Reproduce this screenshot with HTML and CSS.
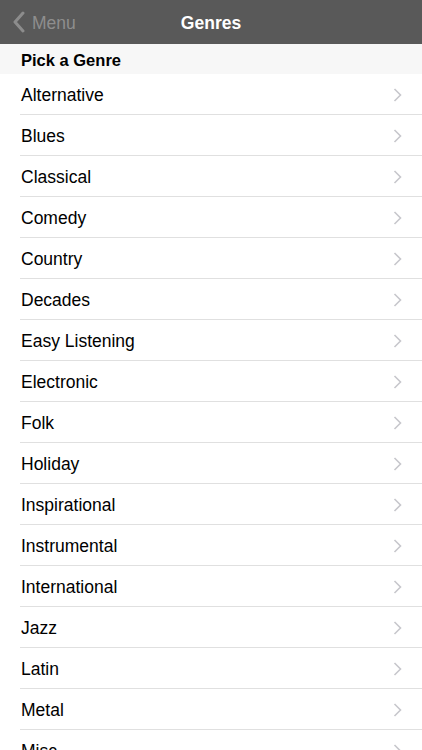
FILE: index.html
```html
<!DOCTYPE html>
<html>
<head>
<meta charset="utf-8">
<link rel="stylesheet" href="styles.css">
</head>
<body>
<div class="app">
  <header class="navbar">
    <div class="back">
      <svg class="back-icon" width="14" height="22" viewBox="0 0 14 22"><path d="M11 2 L3 11 L11 20" fill="none" stroke="#8c8c8c" stroke-width="3" stroke-linecap="round" stroke-linejoin="round"/></svg>
      <span class="back-label">Menu</span>
    </div>
    <div class="title">Genres</div>
  </header>
  <div class="section-header">Pick a Genre</div>
  <ul class="list">
    <li class="row"><span>Alternative</span><svg class="chev" width="9" height="14" viewBox="0 0 9 14"><path d="M1.5 1 L7.5 7 L1.5 13" fill="none" stroke="#c7c7cc" stroke-width="1.6"/></svg></li>
    <li class="row"><span>Blues</span><svg class="chev" width="9" height="14" viewBox="0 0 9 14"><path d="M1.5 1 L7.5 7 L1.5 13" fill="none" stroke="#c7c7cc" stroke-width="1.6"/></svg></li>
    <li class="row"><span>Classical</span><svg class="chev" width="9" height="14" viewBox="0 0 9 14"><path d="M1.5 1 L7.5 7 L1.5 13" fill="none" stroke="#c7c7cc" stroke-width="1.6"/></svg></li>
    <li class="row"><span>Comedy</span><svg class="chev" width="9" height="14" viewBox="0 0 9 14"><path d="M1.5 1 L7.5 7 L1.5 13" fill="none" stroke="#c7c7cc" stroke-width="1.6"/></svg></li>
    <li class="row"><span>Country</span><svg class="chev" width="9" height="14" viewBox="0 0 9 14"><path d="M1.5 1 L7.5 7 L1.5 13" fill="none" stroke="#c7c7cc" stroke-width="1.6"/></svg></li>
    <li class="row"><span>Decades</span><svg class="chev" width="9" height="14" viewBox="0 0 9 14"><path d="M1.5 1 L7.5 7 L1.5 13" fill="none" stroke="#c7c7cc" stroke-width="1.6"/></svg></li>
    <li class="row"><span>Easy Listening</span><svg class="chev" width="9" height="14" viewBox="0 0 9 14"><path d="M1.5 1 L7.5 7 L1.5 13" fill="none" stroke="#c7c7cc" stroke-width="1.6"/></svg></li>
    <li class="row"><span>Electronic</span><svg class="chev" width="9" height="14" viewBox="0 0 9 14"><path d="M1.5 1 L7.5 7 L1.5 13" fill="none" stroke="#c7c7cc" stroke-width="1.6"/></svg></li>
    <li class="row"><span>Folk</span><svg class="chev" width="9" height="14" viewBox="0 0 9 14"><path d="M1.5 1 L7.5 7 L1.5 13" fill="none" stroke="#c7c7cc" stroke-width="1.6"/></svg></li>
    <li class="row"><span>Holiday</span><svg class="chev" width="9" height="14" viewBox="0 0 9 14"><path d="M1.5 1 L7.5 7 L1.5 13" fill="none" stroke="#c7c7cc" stroke-width="1.6"/></svg></li>
    <li class="row"><span>Inspirational</span><svg class="chev" width="9" height="14" viewBox="0 0 9 14"><path d="M1.5 1 L7.5 7 L1.5 13" fill="none" stroke="#c7c7cc" stroke-width="1.6"/></svg></li>
    <li class="row"><span>Instrumental</span><svg class="chev" width="9" height="14" viewBox="0 0 9 14"><path d="M1.5 1 L7.5 7 L1.5 13" fill="none" stroke="#c7c7cc" stroke-width="1.6"/></svg></li>
    <li class="row"><span>International</span><svg class="chev" width="9" height="14" viewBox="0 0 9 14"><path d="M1.5 1 L7.5 7 L1.5 13" fill="none" stroke="#c7c7cc" stroke-width="1.6"/></svg></li>
    <li class="row"><span>Jazz</span><svg class="chev" width="9" height="14" viewBox="0 0 9 14"><path d="M1.5 1 L7.5 7 L1.5 13" fill="none" stroke="#c7c7cc" stroke-width="1.6"/></svg></li>
    <li class="row"><span>Latin</span><svg class="chev" width="9" height="14" viewBox="0 0 9 14"><path d="M1.5 1 L7.5 7 L1.5 13" fill="none" stroke="#c7c7cc" stroke-width="1.6"/></svg></li>
    <li class="row"><span>Metal</span><svg class="chev" width="9" height="14" viewBox="0 0 9 14"><path d="M1.5 1 L7.5 7 L1.5 13" fill="none" stroke="#c7c7cc" stroke-width="1.6"/></svg></li>
    <li class="row"><span>Misc</span><svg class="chev" width="9" height="14" viewBox="0 0 9 14"><path d="M1.5 1 L7.5 7 L1.5 13" fill="none" stroke="#c7c7cc" stroke-width="1.6"/></svg></li>
  </ul>
</div>
</body>
</html>
```

FILE: styles.css
```css
html, body {
  margin: 0;
  padding: 0;
  background: #ffffff;
  font-family: "Liberation Sans", Arial, Helvetica, sans-serif;
}
.app {
  width: 422px;
  height: 750px;
  overflow: hidden;
}
.navbar {
  box-sizing: border-box;
  height: 44px;
  padding-top: 2px;
  background: #595959;
  display: flex;
  align-items: center;
  justify-content: center;
  position: relative;
}
.back {
  position: absolute;
  left: 12px;
  top: 0;
  height: 44px;
  display: flex;
  align-items: center;
  gap: 6px;
}
.back-icon {
  display: block;
}
.back-label {
  color: #8e8e8e;
  font-size: 17.5px;
  padding-top: 2px;
}
.title {
  color: #ffffff;
  font-size: 17.5px;
  font-weight: bold;
}
.section-header {
  box-sizing: border-box;
  height: 30px;
  padding-top: 2px;
  background: #f7f7f7;
  padding-left: 21px;
  display: flex;
  align-items: center;
  font-size: 16.5px;
  font-weight: bold;
  color: #000;
}
.list {
  list-style: none;
  margin: 0;
  padding: 0 0 0 20px;
}
.row {
  box-sizing: border-box;
  height: 41px;
  padding-top: 3px;
  border-bottom: 1px solid #e0e0e0;
  display: flex;
  align-items: center;
  justify-content: space-between;
  padding-left: 1px;
  padding-right: 20px;
  font-size: 17.5px;
  color: #000;
}
.chev {
  display: block;
  margin-top: -2px;
}
```
